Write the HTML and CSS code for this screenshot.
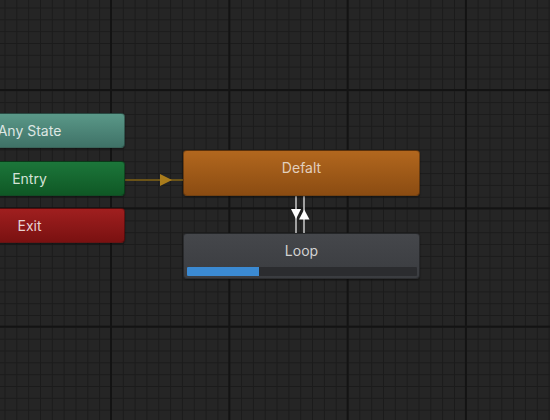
FILE: index.html
```html
<!DOCTYPE html>
<html>
<head>
<meta charset="utf-8">
<link rel="stylesheet" href="styles.css">
</head>
<body>
<div class="canvas">
  <svg class="links" width="550" height="420" viewBox="0 0 550 420">
    <line x1="125" y1="180" x2="184" y2="180" stroke="#6a5318" stroke-width="2"/>
    <polygon points="160,174 172,180 160,186" fill="#a97c1c"/>
    <line x1="296" y1="195" x2="296" y2="234" stroke="#a0a0a0" stroke-width="2"/>
    <line x1="304" y1="195" x2="304" y2="234" stroke="#a0a0a0" stroke-width="2"/>
    <polygon points="291,209 301,209 296,219" fill="#ffffff"/>
    <polygon points="299,219.5 309.5,219.5 304.2,209.5" fill="#ffffff"/>
  </svg>
  <div class="node small any"><span class="label">Any State</span></div>
  <div class="node small entry"><span class="label">Entry</span></div>
  <div class="node small exit"><span class="label">Exit</span></div>
  <div class="node state defalt"><span class="label">Defalt</span></div>
  <div class="node state loop">
    <span class="label">Loop</span>
    <div class="progress"><div class="fill" style="width:31.5%"></div></div>
  </div>
</div>
</body>
</html>
```
FILE: styles.css
```css
html, body {
  margin: 0;
  padding: 0;
  width: 550px;
  height: 420px;
  overflow: hidden;
  background: #232323;
}
.canvas {
  position: relative;
  width: 550px;
  height: 420px;
  background-color: #252525;
  background-image:
    linear-gradient(to right, #131313 2px, transparent 2px),
    linear-gradient(to bottom, #131313 2px, transparent 2px),
    linear-gradient(to right, #1b1b1b 1px, transparent 1px),
    linear-gradient(to bottom, #1b1b1b 1px, transparent 1px);
  background-size: 118.3px 118.3px, 118.3px 118.3px, 11.83px 11.83px, 11.83px 11.83px;
  background-position: 110px 0, 0 89px, 4.5px 0, 0 7.5px;
  font-family: Inter, "Noto Sans", sans-serif;
}
.links {
  position: absolute;
  left: 0;
  top: 0;
}
.node {
  position: absolute;
  box-sizing: border-box;
  border-radius: 4px;
  border: 1px solid rgba(0,0,0,0.35);
  box-shadow: 0 1px 2px rgba(0,0,0,0.45);
  display: flex;
  flex-direction: column;
  align-items: center;
  color: #e2e2e2;
  font-size: 14px;
}
.small {
  left: -66px;
  width: 191px;
  height: 35px;
  justify-content: center;
}
.any {
  top: 113px;
  background: linear-gradient(#5a9888, #3f7267);
  color: #dde6e3;
}
.entry {
  top: 161px;
  background: linear-gradient(#1c763a, #0f5825);
  color: #d4e2d7;
}
.exit {
  top: 208px;
  background: linear-gradient(#a01f1f, #7a1111);
  color: #e6d2d2;
}
.state {
  left: 183px;
  width: 237px;
  height: 46px;
  padding-top: 8px;
}
.defalt {
  top: 150px;
  background: linear-gradient(#b2671e, #8b4c12);
  color: #e2cfbd;
}
.loop {
  top: 233px;
  background: linear-gradient(#45474b, #3a3c40);
  color: #d2d2d2;
}
.label {
  line-height: 18px;
}
.progress {
  margin-top: 7px;
  width: 230px;
  height: 9px;
  background: #2b2c2f;
  border-radius: 1px;
  overflow: hidden;
}
.fill {
  height: 100%;
  background: #3b8ad2;
}
```
